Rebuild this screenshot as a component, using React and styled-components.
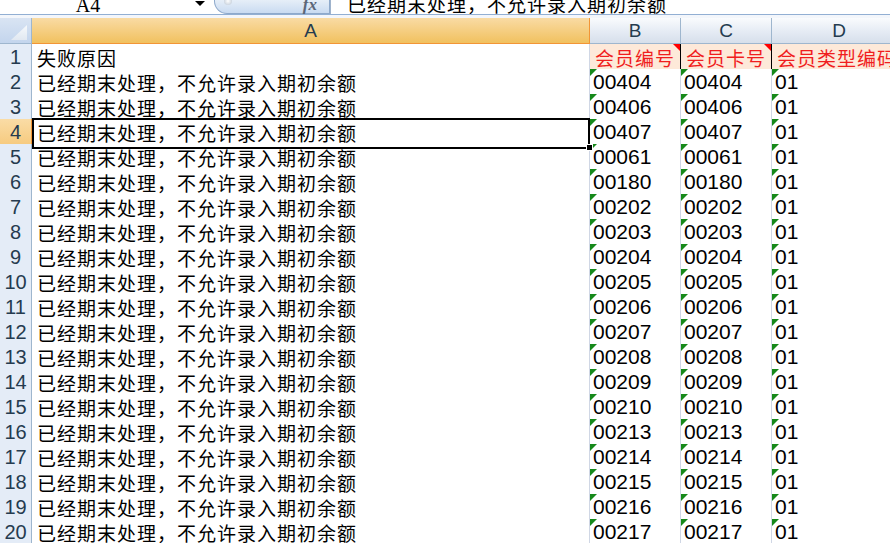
import React from "react"
import styled, { createGlobalStyle } from "styled-components"

const GlobalStyle = createGlobalStyle`
  html, body {
    margin: 0;
    padding: 0;
    background: #fff;
    overflow: hidden;
  }
  body {
    font-family: "Liberation Sans", "Noto Sans CJK SC", sans-serif;
  }
`

const COLS = "32px 558px 91px 91px 135px"

const Sheet = styled.div`
  width: 890px;
  height: 543px;
  overflow: hidden;
  display: flex;
  flex-direction: column;
`

const FormulaBar = styled.div`
  display: flex;
  height: 14px;
  flex: none;
  overflow: hidden;
  border-bottom: 1px solid #92afd3;
`

const NameBox = styled.div`
  width: 176px;
  display: flex;
  align-items: flex-end;
  justify-content: center;
  font-family: "Liberation Serif", serif;
  font-size: 20px;
  line-height: 18px;
  color: #000;
`

const DropArrow = styled.div`
  width: 38px;
  display: flex;
  justify-content: center;
  padding-left: 10px;
  box-sizing: border-box;
  &::before {
    content: "";
    margin-top: 1px;
    border-top: 5px solid #000;
    border-left: 5px solid transparent;
    border-right: 5px solid transparent;
    height: 0;
  }
`

const FxButton = styled.div`
  width: 116px;
  box-sizing: border-box;
  position: relative;
  display: flex;
  align-items: flex-end;
  justify-content: flex-end;
  padding-right: 12px;
  background: linear-gradient(#e6eef8, #c9dbf1);
  border: 1px solid #8ea9cb;
  border-top: none;
  border-radius: 0 0 0 13px;
  font-family: "Liberation Serif", serif;
  font-style: italic;
  font-weight: bold;
  font-size: 17px;
  line-height: 17px;
  color: #5b6678;
  &::before {
    content: "";
    position: absolute;
    left: 9px;
    top: -3px;
    width: 8px;
    height: 8px;
    border-radius: 50%;
    background: radial-gradient(#ffffff, #b8c4d2);
  }
`

const FormulaText = styled.div`
  flex: 1;
  display: flex;
  align-items: flex-end;
  padding-left: 16px;
  border-left: 1px solid #9fb3cc;
  font-family: "Noto Sans CJK SC", sans-serif;
  font-size: 19px;
  letter-spacing: 1px;
  line-height: 20px;
  color: #000;
  white-space: nowrap;
`

const Spacer = styled.div`
  height: 3px;
  flex: none;
  background: #f3f6fb;
`

const Row = styled.div`
  display: grid;
  grid-template-columns: ${COLS};
  height: ${(p) => p.$h || 25}px;
  flex: none;
`

const Corner = styled.div`
  box-sizing: border-box;
  background: linear-gradient(#d9e4f3, #c3d5ed);
  border-right: 1px solid #9eb6ce;
  border-bottom: 1px solid #9eb6ce;
  display: flex;
  align-items: flex-end;
  justify-content: flex-end;
  padding: 0 4px 3px 0;
`

const ColHead = styled.div`
  box-sizing: border-box;
  display: flex;
  align-items: center;
  justify-content: center;
  font-size: 19px;
  color: #253b4f;
  background: ${(p) =>
    p.$active
      ? "linear-gradient(#f9dba4, #f1c15f)"
      : "linear-gradient(#f9fbfd, #e5ebf4 55%, #d6dfeb)"};
  border-right: 1px solid ${(p) => (p.$active ? "#f29536" : "#9eb6ce")};
  border-bottom: 1px solid ${(p) => (p.$active ? "#f29536" : "#9eb6ce")};
`

const RowHead = styled.div`
  box-sizing: border-box;
  display: flex;
  align-items: center;
  justify-content: center;
  padding-bottom: 2px;
  font-size: 20px;
  color: #253b4f;
  background: ${(p) => (p.$active ? "linear-gradient(#fadca6, #f6c97c)" : "#e4ecf7")};
  border-right: 1px solid ${(p) => (p.$active ? "#f29536" : "#9eb6ce")};
  border-bottom: 1px solid ${(p) => (p.$active ? "#f29536" : "#9eb6ce")};
`

const Cell = styled.div`
  box-sizing: border-box;
  position: relative;
  display: flex;
  align-items: center;
  padding-left: ${(p) => (p.$cjk ? 5 : 3)}px;
  padding-bottom: ${(p) => (p.$cjk ? 1 : 3)}px;
  white-space: nowrap;
  font-size: ${(p) => (p.$cjk ? 19 : 21)}px;
  letter-spacing: ${(p) => (p.$cjk ? 1 : 0)}px;
  color: ${(p) => (p.$red ? "#f01e1e" : "#000")};
  background: ${(p) => (p.$head ? "#fde9d9" : "#fff")};
  border-right: 1px solid ${(p) => (p.$head ? "#000" : "#d0d7e5")};
  border-bottom: 1px solid #d0d7e5;
  z-index: ${(p) => (p.$selected ? 2 : "auto")};

  ${(p) =>
    p.$selected &&
    `
    &::after {
      content: "";
      position: absolute;
      left: 0;
      top: -1px;
      right: -1px;
      bottom: -2px;
      border: 2px solid #000;
      pointer-events: none;
    }
  `}
`

const Handle = styled.span`
  position: absolute;
  right: -4px;
  bottom: -4px;
  width: 5px;
  height: 5px;
  background: #000;
  border: 1px solid #fff;
  z-index: 3;
`

const GreenFlag = styled.span`
  position: absolute;
  top: 0;
  left: 0;
  width: 0;
  height: 0;
  border-top: 7px solid #16891a;
  border-right: 7px solid transparent;
`

const RedFlag = styled.span`
  position: absolute;
  top: 0;
  right: 0;
  width: 0;
  height: 0;
  border-top: 7px solid #f00;
  border-left: 7px solid transparent;
`

const ids = [
  "00404", "00406", "00407", "00061", "00180", "00202", "00203", "00204",
  "00205", "00206", "00207", "00208", "00209", "00210", "00213", "00214",
  "00215", "00216", "00217",
]

const REASON = "已经期末处理，不允许录入期初余额"

export default function App() {
  return (
    <Sheet>
      <GlobalStyle />
      <FormulaBar>
        <NameBox>A4</NameBox>
        <DropArrow />
        <FxButton>fx</FxButton>
        <FormulaText>{REASON}</FormulaText>
      </FormulaBar>
      <Spacer />
      <Row $h={26}>
        <Corner>
          <svg width="16" height="15" viewBox="0 0 16 15">
            <defs>
              <linearGradient id="tri" x1="0" y1="0" x2="0" y2="1">
                <stop offset="0" stopColor="#f6f9fc" />
                <stop offset="1" stopColor="#e1e8f1" />
              </linearGradient>
            </defs>
            <polygon points="0,15 16,0 16,15" fill="url(#tri)" />
          </svg>
        </Corner>
        <ColHead $active>A</ColHead>
        <ColHead>B</ColHead>
        <ColHead>C</ColHead>
        <ColHead>D</ColHead>
      </Row>
      <Row>
        <RowHead>1</RowHead>
        <Cell $cjk>失败原因</Cell>
        <Cell $cjk $head $red>会员编号<RedFlag /></Cell>
        <Cell $cjk $head $red>会员卡号<RedFlag /></Cell>
        <Cell $cjk $head $red>会员类型编码</Cell>
      </Row>
      {ids.map((id, i) => {
        const n = i + 2
        const sel = n === 4
        return (
          <Row key={n}>
            <RowHead $active={sel}>{n}</RowHead>
            <Cell $cjk $selected={sel}>
              {REASON}
              {sel && <Handle />}
            </Cell>
            <Cell><GreenFlag />{id}</Cell>
            <Cell><GreenFlag />{id}</Cell>
            <Cell><GreenFlag />01</Cell>
          </Row>
        )
      })}
    </Sheet>
  )
}
